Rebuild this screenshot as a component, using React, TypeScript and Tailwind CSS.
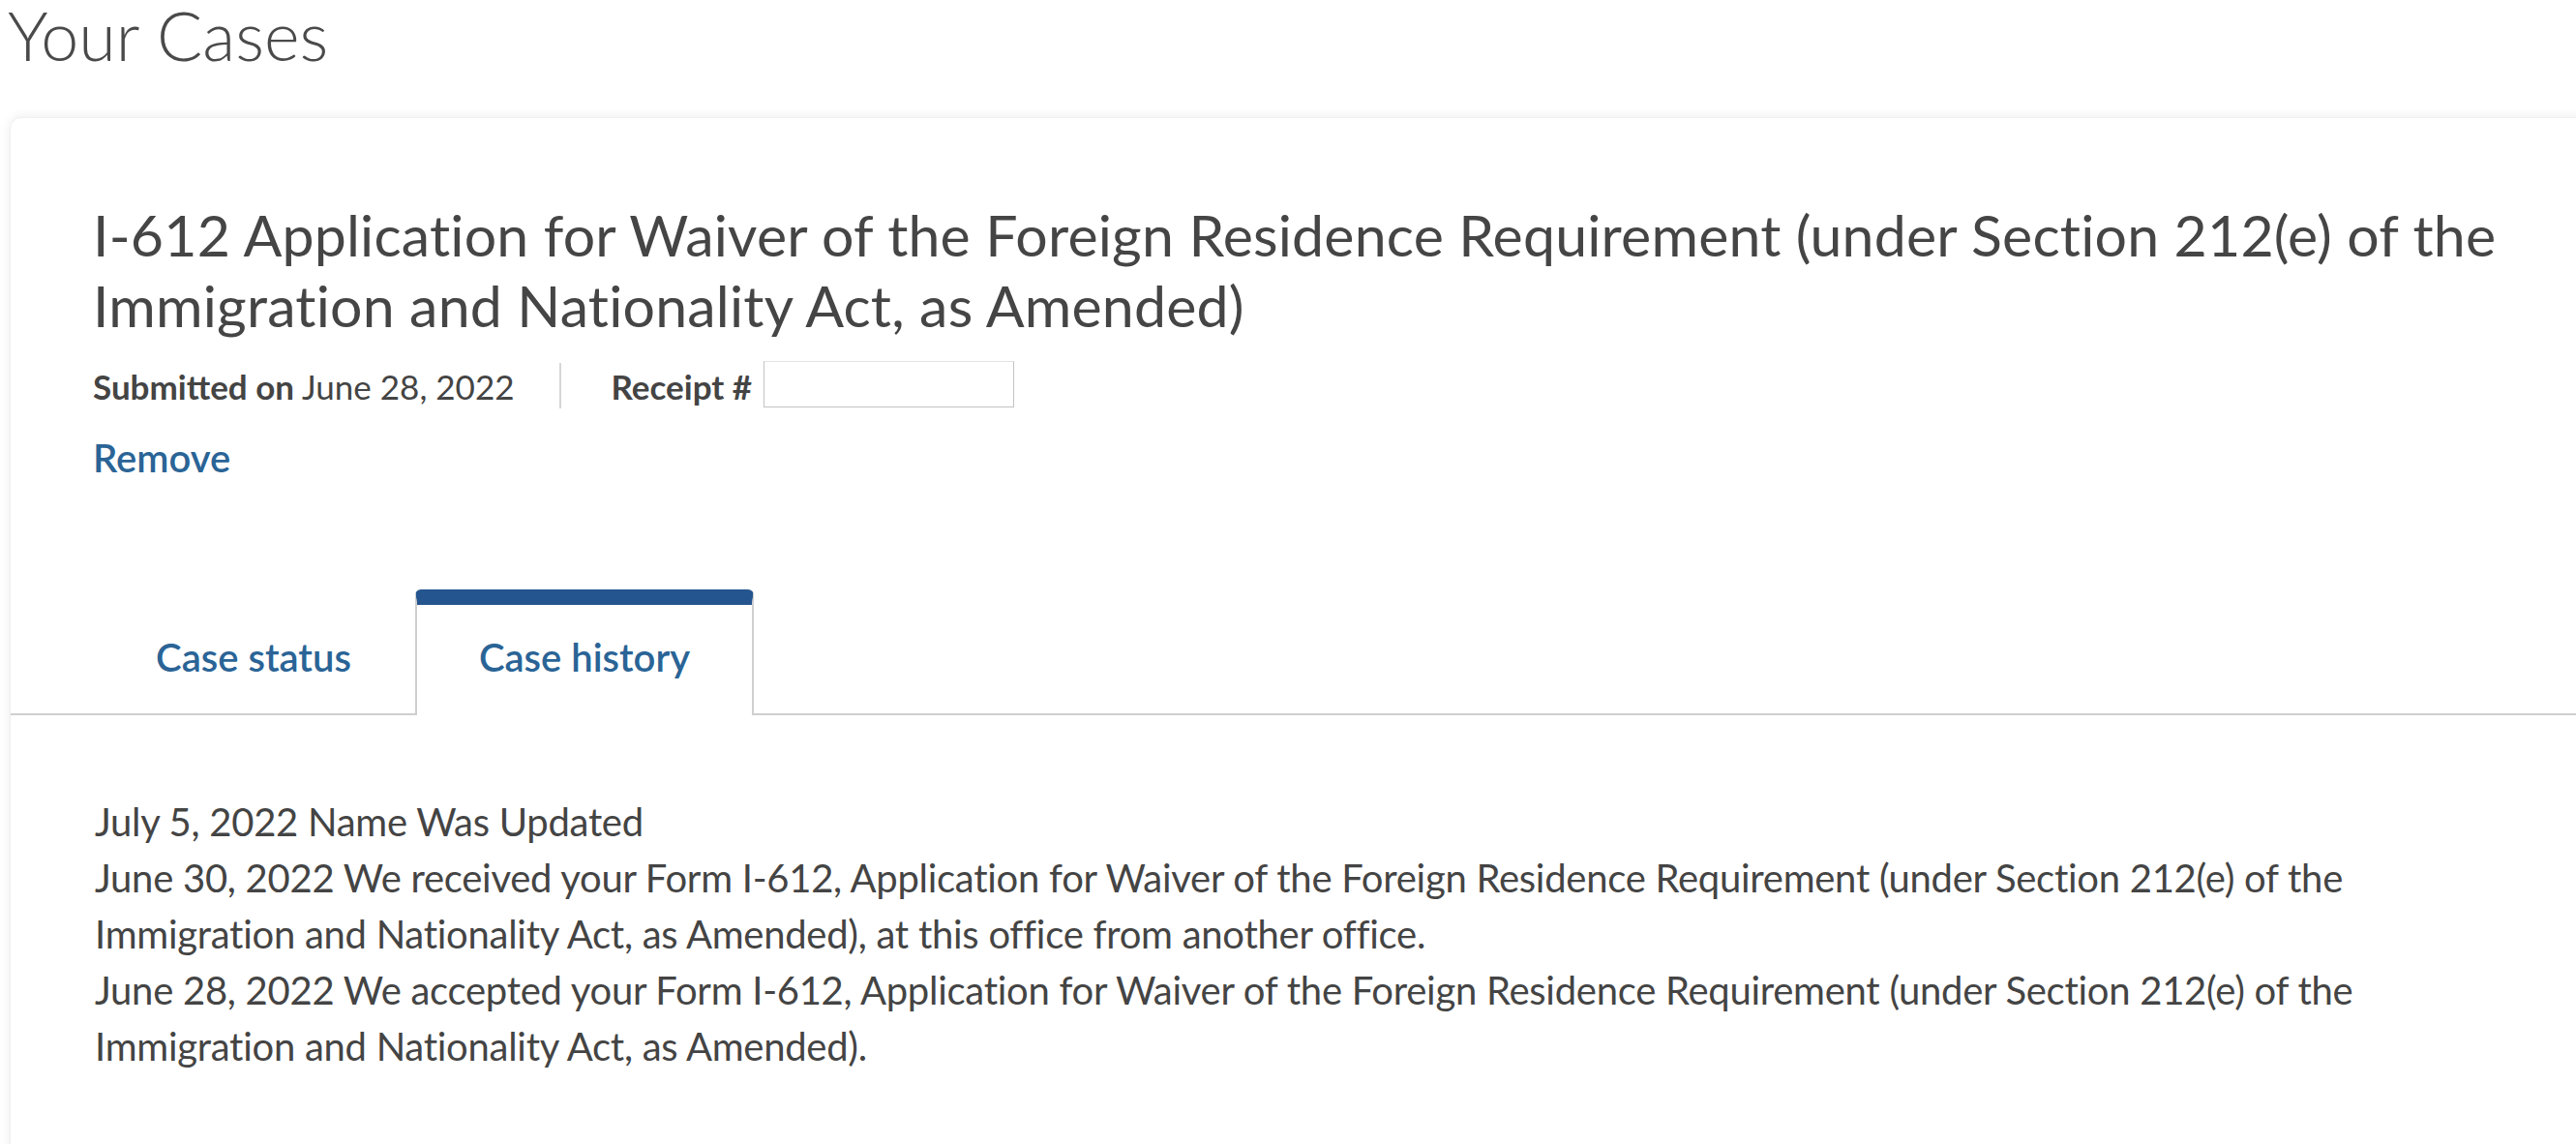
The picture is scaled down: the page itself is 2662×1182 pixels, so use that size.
import React from "react";

const font = { fontFamily: "Lato, 'Noto Sans', sans-serif" };

export default function App() {
  return (
    <div className="w-[2662px] h-[1182px] overflow-hidden bg-white text-[#444]" style={font}>
      <h1 className="pl-[8px] pt-[7px] text-[70px] leading-[58px] font-light text-[#4a4a4a]">Your Cases</h1>

      <div className="ml-[10px] mt-[56px] w-[2720px] h-[1200px] rounded-[12px] border border-[#f0f0f0] bg-white shadow-[0_0_12px_rgba(0,0,0,0.08)]">
        <div className="pl-[85px] pt-[84px]">
          <h2 className="text-[59px] leading-[73px] font-normal tracking-[0.2px] text-[#454545]">
            <span className="block whitespace-nowrap">
              I-612 Application for Waiver of the Foreign Residence Requirement (under Section 212(e) of the
            </span>
            <span className="block whitespace-nowrap">Immigration and Nationality Act, as Amended)</span>
          </h2>

          <div className="mt-[21px] flex items-start text-[35px] text-[#444]">
            <span className="mt-[2px] leading-[48px] whitespace-nowrap">
              <span className="font-bold">Submitted on</span> June 28, 2022
            </span>
            <span className="mt-[2px] ml-[46px] h-[47px] w-[2px] bg-[#d6d6d6]"></span>
            <span className="mt-[2px] ml-[52px] leading-[48px] font-bold whitespace-nowrap">Receipt #</span>
            <span className="ml-[12px] h-[48px] w-[259px] border border-[#c4c4c4] border-t-[#e3e3e3] bg-white"></span>
          </div>

          <div className="mt-[26px] text-[40px] leading-[48px] font-semibold text-[#2a6496]">Remove</div>
        </div>

        <div className="mt-[112px] flex border-b-2 border-[#cfcfcf] pl-[84px]">
          <div className="flex w-[334px] items-start justify-center pt-[46px] pb-[34px] text-[40px] leading-[48px] font-semibold text-[#2a6496]">
            Case status
          </div>
          <div className="-mb-[2px] flex w-[350px] justify-center rounded-t-[6px] border-x-2 border-t-[16px] border-x-[#cfcfcf] border-t-[#24558e] bg-white pt-[30px] pb-[36px] text-[40px] leading-[48px] font-semibold text-[#2a6496]">
            Case history
          </div>
        </div>

        <div className="pl-[87px] pt-[81px] text-[40px] leading-[58px] tracking-[-0.27px] text-[#444]">
          <div className="whitespace-nowrap">July 5, 2022 Name Was Updated</div>
          <div className="whitespace-nowrap">
            June 30, 2022 We received your Form I-612, Application for Waiver of the Foreign Residence Requirement (under Section 212(e) of the
          </div>
          <div className="whitespace-nowrap">
            Immigration and Nationality Act, as Amended), at this office from another office.
          </div>
          <div className="whitespace-nowrap">
            June 28, 2022 We accepted your Form I-612, Application for Waiver of the Foreign Residence Requirement (under Section 212(e) of the
          </div>
          <div className="whitespace-nowrap">Immigration and Nationality Act, as Amended).</div>
        </div>
      </div>
    </div>
  );
}
